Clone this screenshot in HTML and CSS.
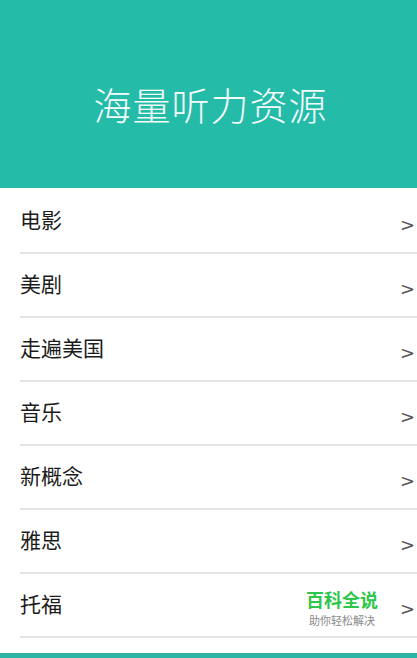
FILE: index.html
```html
<!DOCTYPE html>
<html lang="zh">
<head>
    <meta charset="UTF-8">
    <meta name="viewport" content="width=device-width, initial-scale=1.0">
    <title>海量听力资源</title>
    <link rel="stylesheet" href="styles.css">
</head>
<body>

<div class="header">
    <h1>海量听力资源</h1>
</div>

<ul class="menu">
    <li class="menu-item"><span class="label">电影</span><span class="arrow">&gt;</span></li>
    <li class="menu-item"><span class="label">美剧</span><span class="arrow">&gt;</span></li>
    <li class="menu-item"><span class="label">走遍美国</span><span class="arrow">&gt;</span></li>
    <li class="menu-item"><span class="label">音乐</span><span class="arrow">&gt;</span></li>
    <li class="menu-item"><span class="label">新概念</span><span class="arrow">&gt;</span></li>
    <li class="menu-item"><span class="label">雅思</span><span class="arrow">&gt;</span></li>
    <li class="menu-item">
        <span class="label">托福</span>
        <span class="watermark">
            <span class="wm-title">百科全说</span>
            <span class="wm-sub">助你轻松解决</span>
        </span>
        <span class="arrow">&gt;</span>
    </li>
</ul>

<div class="footer-bar"></div>

</body>
</html>
```

FILE: styles.css
```css
body {
    margin: 0;
    width: 417px;
    height: 658px;
    overflow: hidden;
    background: #fff;
    font-family: "Noto Sans CJK SC", "Noto Sans", sans-serif;
    display: flex;
    flex-direction: column;
}

.header {
    height: 188px;
    flex-shrink: 0;
    background-color: #25bba9;
    display: flex;
    align-items: center;
    justify-content: center;
}

.header h1 {
    margin: 18px 0 0 4px;
    color: #f4fbfa;
    font-size: 38px;
    font-weight: 300;
    letter-spacing: 1px;
}

.menu {
    list-style: none;
    margin: 0;
    padding: 2px 0 0 20px;
    flex: 1;
}

.menu-item {
    height: 62px;
    border-bottom: 2px solid #e4e4e4;
    display: flex;
    align-items: center;
}

.label {
    flex: 1;
    font-size: 21px;
    color: #1c1c1c;
    margin-top: -4px;
}

.arrow {
    width: 17px;
    font-size: 18px;
    color: #555;
    margin-top: 6px;
    font-family: "DejaVu Sans", sans-serif;
}

.watermark {
    display: flex;
    flex-direction: column;
    align-items: center;
    margin-right: 22px;
    margin-top: 6px;
}

.wm-title {
    color: #2cc64a;
    font-size: 18px;
    font-weight: bold;
    line-height: 18px;
}

.wm-sub {
    color: #8a8a8a;
    font-size: 11px;
    line-height: 11px;
    margin-top: 7px;
}

.footer-bar {
    height: 5px;
    flex-shrink: 0;
    background-color: #2cb5a4;
}
```
